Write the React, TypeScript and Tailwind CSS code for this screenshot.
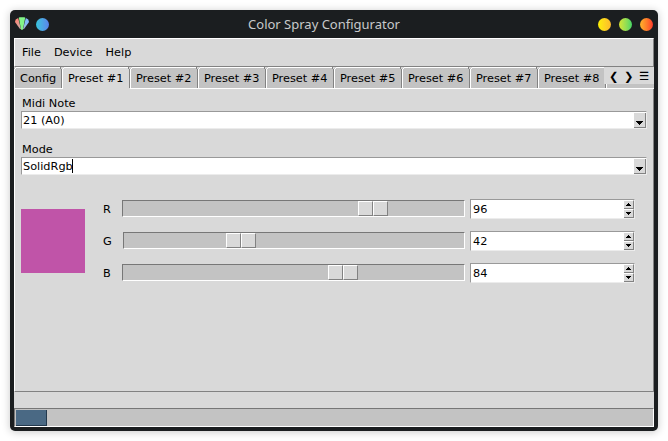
import React from "react";

const channels = [
  { name: "R", value: 96, inset: "pl-0", offset: "ml-[235px]" },
  { name: "G", value: 42, inset: "pl-px", offset: "ml-[102px]" },
  { name: "B", value: 84, inset: "pl-0", offset: "ml-[205px]" },
];

function LogoIcon() {
  return (
    <svg width="14" height="14" viewBox="0 0 14 14">
      <defs>
        <linearGradient id="petalRed" x1="0" y1="0" x2="0.6" y2="1">
          <stop offset="0.3" stopColor="#f98a7c" />
          <stop offset="1" stopColor="#c9a9a4" />
        </linearGradient>
        <linearGradient id="petalBlue" x1="0.6" y1="0" x2="0" y2="1">
          <stop offset="0.3" stopColor="#82bbfa" />
          <stop offset="1" stopColor="#a9b5c9" />
        </linearGradient>
      </defs>
      <path d="M0 5 0.7 2.6 3.2 1 6 12.2 4.8 11.8Z" fill="url(#petalRed)" />
      <path d="M3.8 0.6 5 0.2H9L10.2 0.6 7.9 12.8H6.1Z" fill="#83f588" />
      <path d="M10.8 1 13.3 2.6 14 5 9.2 11.8 8 12.2Z" fill="url(#petalBlue)" />
    </svg>
  );
}

function Tab({ label, active = false, first = false }: { label: string; active?: boolean; first?: boolean }) {
  const width = first ? "w-12" : "w-[68px]";
  const tone = active ? "bg-[#d9d9d9]" : "bg-[#c3c3c3] border-b border-b-white";
  return (
    <div className={`relative h-[22px] shrink-0 ${width} ${tone}`}>
      <svg className="absolute inset-0" width="100%" height="22" shapeRendering="crispEdges">
        <rect x="0" y="0" width="100%" height="1" fill="#fff" />
        <rect x="0" y="2" width="1" height="20" fill="#fff" />
        <rect x="0" y="0" width="2" height="1" fill="#d9d9d9" />
        <rect x="1" y="1" width="1" height="1" fill="#fff" />
        <svg x="100%" overflow="visible">
          <rect x="-2" y="0" width="2" height="1" fill="#828282" />
          <rect x="-1" y="0" width="1" height="2" fill="#d9d9d9" />
          <rect x="-2" y="1" width="1" height="1" fill="#828282" />
          <rect x="-1" y="2" width="1" height="19" fill="#828282" />
        </svg>
      </svg>
      <span className="relative block pl-1.5 leading-6 whitespace-nowrap">{label}</span>
    </div>
  );
}

function Combo({ label, value, caret = false }: { label: string; value: string; caret?: boolean }) {
  return (
    <div className="h-[46px]">
      <div className="h-4 pl-px leading-[18px]">{label}</div>
      <div className="flex h-[18px] w-[626px] justify-between border border-t-[#999] border-r-[#ececec] border-b-[#ececec] border-l-[#999] bg-white pl-px">
        <div className="flex h-4 leading-[18px]">
          {value}
          {caret && <i className="mt-px -ml-px h-3.5 w-px bg-black" />}
        </div>
        <div className="mt-px flex h-[15px] w-3 justify-center border-r border-b border-[#828282] bg-[#d9d9d9] pt-2">
          <svg width="7" height="4" shapeRendering="crispEdges">
            <path d="M0 0h7v1H6v1H5v1H4v1H3V3H2V2H1V1H0z" />
          </svg>
        </div>
      </div>
    </div>
  );
}

function SpinButton({ up = false }: { up?: boolean }) {
  return (
    <div className="flex h-[9px] w-2.5 justify-center border-t border-r border-b border-t-white border-r-[#828282] border-b-[#828282] bg-[#d9d9d9] pt-0.5">
      <svg width="5" height="3" shapeRendering="crispEdges">
        <path d={up ? "M2 0h1v1h1v1h1v1H0V2h1V1h1z" : "M0 0h5v1H4v1H3v1H2V2H1V1H0z"} />
      </svg>
    </div>
  );
}

function Thumb() {
  return <div className="size-[15px] border border-t-white border-r-[#828282] border-b-[#828282] border-l-white bg-[#d9d9d9]" />;
}

function Channel({ name, value, inset, offset }: (typeof channels)[number]) {
  return (
    <div className="flex h-8">
      <span className="w-[19px] pt-[3px] leading-4">{name}</span>
      <div className={`mt-px h-[17px] w-[343px] ${inset}`}>
        <div className="h-[17px] border border-t-[#777] border-r-white border-b-white border-l-[#777] bg-[#c3c3c3]">
          <div className={`flex ${offset}`}>
            <Thumb />
            <Thumb />
          </div>
        </div>
      </div>
      <div className="ml-[5px] flex h-5 w-[165px] justify-between border border-t-[#999] border-r-[#ececec] border-b-[#ececec] border-l-[#999] bg-white pl-0.5">
        <span className="leading-[19px]">{value}</span>
        <div className="h-[18px]">
          <SpinButton up />
          <SpinButton />
        </div>
      </div>
    </div>
  );
}

export default function App() {
  return (
    <div className="h-[441px] w-[668px] overflow-hidden bg-white p-2.5 pb-0 font-['DejaVu_Sans',sans-serif] text-[11.3px] text-black">
      <div className="h-[421px] w-[648px] rounded-[5px] bg-[#1b1e20] px-1 shadow-[0_1px_9px_rgba(0,0,0,0.22)]">
        <header className="flex h-7 items-center">
          <div className="flex w-[150px] items-center gap-[7px] pl-px">
            <LogoIcon />
            <i className="size-[13px] rounded-full bg-linear-to-r from-[#36c5dc] to-[#5a83ea]" />
          </div>
          <h1 className="w-80 text-center font-['Noto_Sans',sans-serif] text-[13px] leading-7 text-[#c8cacb]">
            Color Spray Configurator
          </h1>
          <div className="flex w-[169px] items-center justify-end gap-2">
            <i className="size-[13px] rounded-full bg-linear-to-r from-[#fcf000] to-[#fdb92b]" />
            <i className="size-[13px] rounded-full bg-linear-to-r from-[#d4e531] to-[#3fd765]" />
            <i className="size-[13px] rounded-full bg-linear-to-r from-[#fdb32a] to-[#fe3429]" />
          </div>
        </header>
        <div className="h-[389px] w-[640px] bg-[#d9d9d9]">
          <nav className="flex h-[29px] gap-[13px] border border-t-white border-r-[#828282] border-b-[#828282] border-l-white pl-[7px] leading-7">
            <span>File</span>
            <span>Device</span>
            <span>Help</span>
          </nav>
          <div className="relative flex h-[22px] overflow-hidden">
            <Tab label="Config" first />
            {[1, 2, 3, 4, 5, 6, 7, 8].map((n) => (
              <Tab key={n} label={`Preset #${n}`} active={n === 1} />
            ))}
            <Tab label="" />
            <div className="absolute top-0 right-0 flex h-[17px] w-[50px] bg-[#d9d9d9] pl-[5px] leading-[19px]">
              <span className="w-[15px]">❮</span>
              <span className="w-[15px]">❯</span>
              <span>☰</span>
            </div>
          </div>
          <main className="h-[303px] border-r border-b border-l border-r-[#828282] border-b-[#828282] border-l-white pt-1.5 pl-1.5">
            <Combo label="Midi Note" value="21 (A0)" />
            <Combo label="Mode" value="SolidRgb" caret />
            <div className="flex pt-3">
              <div className="mt-2.5 h-16 w-16 bg-[#c054a8]" />
              <div className="ml-[18px]">
                {channels.map((c) => (
                  <Channel key={c.name} {...c} />
                ))}
              </div>
            </div>
          </main>
          <div className="h-4" />
          <div className="h-[19px] border border-t-[#777] border-r-white border-b-white border-l-[#777] bg-[#c3c3c3]">
            <div className="mt-px ml-px h-4 w-[31px] border-r border-b border-[#23394d] bg-[#4a6984]" />
          </div>
        </div>
      </div>
    </div>
  );
}
